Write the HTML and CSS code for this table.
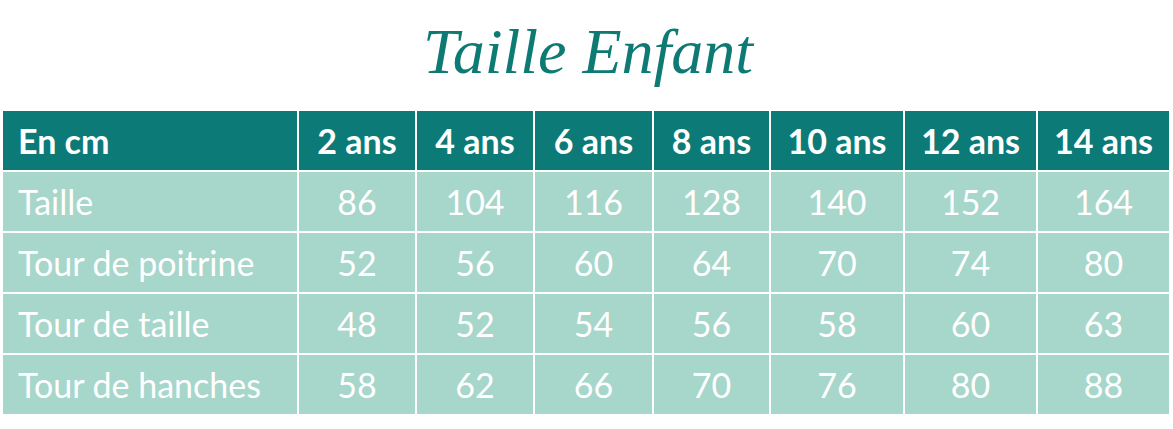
FILE: index.html
```html
<!DOCTYPE html>
<html lang="fr">
<head>
<meta charset="utf-8">
<title>Taille Enfant</title>
<link rel="stylesheet" href="styles.css">
</head>
<body>
<div class="page">
  <h1 class="title">Taille Enfant</h1>
  <div class="table">
    <div class="cell head label">En cm</div>
    <div class="cell head">2 ans</div>
    <div class="cell head">4 ans</div>
    <div class="cell head">6 ans</div>
    <div class="cell head">8 ans</div>
    <div class="cell head">10 ans</div>
    <div class="cell head">12 ans</div>
    <div class="cell head">14 ans</div>

    <div class="cell label">Taille</div>
    <div class="cell">86</div>
    <div class="cell">104</div>
    <div class="cell">116</div>
    <div class="cell">128</div>
    <div class="cell">140</div>
    <div class="cell">152</div>
    <div class="cell">164</div>

    <div class="cell label">Tour de poitrine</div>
    <div class="cell">52</div>
    <div class="cell">56</div>
    <div class="cell">60</div>
    <div class="cell">64</div>
    <div class="cell">70</div>
    <div class="cell">74</div>
    <div class="cell">80</div>

    <div class="cell label">Tour de taille</div>
    <div class="cell">48</div>
    <div class="cell">52</div>
    <div class="cell">54</div>
    <div class="cell">56</div>
    <div class="cell">58</div>
    <div class="cell">60</div>
    <div class="cell">63</div>

    <div class="cell label">Tour de hanches</div>
    <div class="cell">58</div>
    <div class="cell">62</div>
    <div class="cell">66</div>
    <div class="cell">70</div>
    <div class="cell">76</div>
    <div class="cell">80</div>
    <div class="cell">88</div>
  </div>
</div>
</body>
</html>
```

FILE: styles.css
```css
html, body {
  margin: 0;
  padding: 0;
  background: #ffffff;
}

.page {
  width: 1173px;
  padding-left: 3px;
  box-sizing: border-box;
}

.title {
  margin: 0;
  height: 111px;
  display: flex;
  justify-content: center;
  align-items: flex-start;
  padding-top: 14px;
  box-sizing: border-box;
  font-family: "Liberation Serif", serif;
  font-style: italic;
  font-weight: normal;
  font-size: 64px;
  line-height: 76px;
  color: #0e7a74;
  letter-spacing: 0;
}

.table {
  display: grid;
  grid-template-columns: 294px 116px 116px 117px 115px 132px 131px 131px;
  grid-auto-rows: 59px;
  gap: 2px;
  background: #ffffff;
  width: max-content;
}

.cell {
  display: flex;
  align-items: center;
  justify-content: center;
  background: #a7d6cb;
  color: #ffffff;
  font-family: Lato, "Liberation Sans", sans-serif;
  font-size: 34px;
  white-space: nowrap;
}

.cell.label {
  justify-content: flex-start;
  padding-left: 15px;
}

.cell.head {
  background: #0c7a76;
  font-weight: bold;
}
```
